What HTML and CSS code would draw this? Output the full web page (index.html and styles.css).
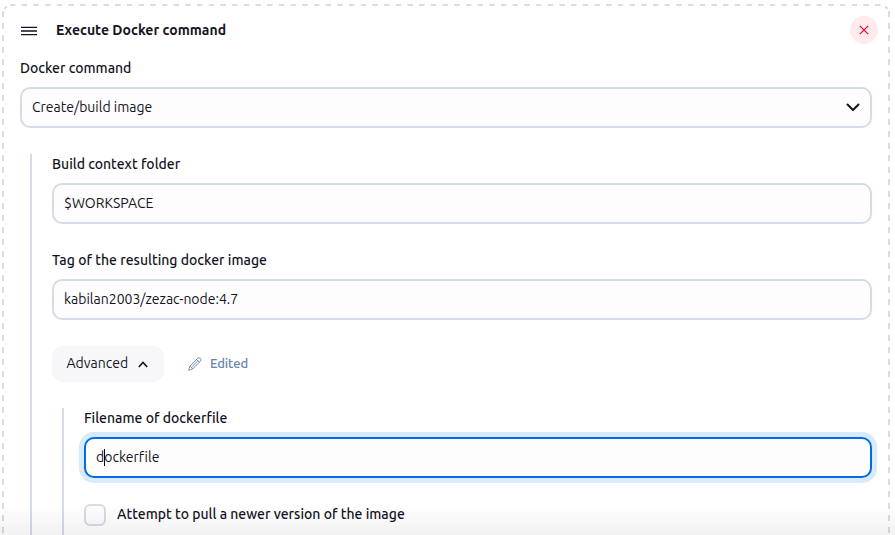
FILE: index.html
```html
<!DOCTYPE html>
<html lang="en">
<head>
<meta charset="utf-8">
<title>Execute Docker command</title>
<link rel="stylesheet" href="styles.css">
</head>
<body>
<main class="step">
  <svg class="frame" width="888" height="531" viewBox="2 4 888 531">
    <path class="edge-top" d="M10 5H882"/>
    <path class="edge-side" d="M3 11V535M889 11V535"/>
    <path class="corner" d="M4.300 8.800L7 6.400M887.700 8.800L885 6.400"/>
  </svg>
  <header class="step-header">
    <svg class="handle" width="16" height="12" viewBox="0 0 16 12"><path d="M0 2.400h16M0 9.600h16"/><path class="handle-middle" d="M0 6h16"/></svg>
    <h1 class="title">Execute Docker command</h1>
    <button class="remove" aria-label="Remove"><svg width="10" height="10" viewBox="0 0 10 10"><path d="M.8.8l8.4 8.4M9.2.8L.8 9.2"/></svg></button>
  </header>
  <div class="label">Docker command</div>
  <div class="control"><span>Create/build image</span>
    <svg class="chevron" width="14" height="9" viewBox="0 0 14 9"><path d="M1.5 1.5L7 7l5.500-5.500"/></svg>
  </div>
  <section class="nested">
    <div class="label">Build context folder</div>
    <div class="control"><span>$WORKSPACE</span></div>
    <div class="label spaced">Tag of the resulting docker image</div>
    <div class="control"><span>kabilan2003/zezac-node:4.7</span></div>
    <div class="advanced-row">
      <button class="advanced"><span>Advanced</span><svg width="10" height="7" viewBox="0 0 10 7"><path d="M.8 6L5 1.500 9.200 6"/></svg></button>
      <svg class="pencil" width="14" height="14" viewBox="0 0 14 14"><path d="M.7 13.300l1-4L9.800 1.200q1.300-1 2.500.2t.3 2.500L4.600 12zM1.700 9.300q2.200.4 2.900 2.700M8.600 2.400l2.900 2.900M9.900 3.800L4 9.700"/></svg>
      <span class="edited">Edited</span>
    </div>
    <section class="nested inner">
      <div class="label">Filename of dockerfile</div>
      <div class="control focused"><span class="value">dockerfile<i class="caret"></i></span></div>
      <div class="check-row"><span class="box"></span><span>Attempt to pull a newer version of the image</span></div>
    </section>
  </section>
</main>
<div class="fade"></div>
</body>
</html>
```
FILE: styles.css
```css
* { box-sizing: border-box; }
html, body { height: 100%; overflow: hidden; }
body {
  margin: 0;
  padding: 4px 5px 0 2px;
  background: #fff;
  color: #14141f;
  font: 14px/20px Ubuntu, "Noto Sans", sans-serif;
}
svg { fill: none; stroke: currentColor; flex: none; }
span { white-space: nowrap; }
button { border: 0; padding: 0; font: inherit; color: inherit; }
.step {
  position: relative;
  height: 531px;
  padding: 12px 18px 0;
}
.frame { position: absolute; top: 0; left: 0; color: #d7dce7; stroke-width: 2; }
.edge-top { stroke-dasharray: 5.4 6.290; }
.edge-side { stroke-dasharray: 6; }
.step-header { display: flex; align-items: center; height: 28px; }
.handle { margin: 2px 0 0 1px; stroke-width: 1.4; }
.handle-middle { stroke: #4a4a58; stroke-width: 2; }
.title { margin: 0 auto 0 19px; font-size: 14px; line-height: 20px; font-weight: 600; letter-spacing: .02px; }
.remove {
  display: flex; align-items: center; justify-content: center;
  width: 28px; height: 28px; margin-right: -6px;
  border-radius: 50%; background: #fdebed; color: #e6002e;
}
.remove svg { stroke-width: 1.2; }
.label { height: 20px; margin: 14px 0 9px; font-weight: 500; }
.control {
  display: flex; align-items: center; justify-content: space-between;
  height: 41px; padding: 0 10px 2px;
  border: 2px solid #d5dbe7; border-radius: 10px; background: #fdfdfd;
}
.chevron { margin-top: 2px; stroke-width: 2; stroke-linecap: round; stroke-linejoin: round; }
.nested {
  height: 381px;
  margin: 26px 0 0 10px; padding-left: 20px;
  border-left: 2px solid #d5dbe7;
}
.nested > .label:first-child { margin-top: 0; }
.nested > .label.spaced { margin-top: 26px; letter-spacing: .01px; }
.advanced-row { display: flex; align-items: center; margin-top: 26px; }
.advanced {
  display: flex; align-items: center; justify-content: space-between;
  width: 112px; height: 36px; padding: 0 16px 2px 14.5px;
  border-radius: 10px; background: #f7f7fa;
}
.advanced svg { margin-top: 3px; stroke-width: 1.6; }
.pencil { margin-left: 24px; color: #6783ab; stroke-width: .9; }
.edited { margin: 0 0 2px 8px; font-size: 13px; font-weight: 500; letter-spacing: -.1px; color: #6783ab; }
.nested.inner { height: 127px; }
.control.focused { border-color: #006ce0; box-shadow: 0 0 0 5px #d8eafb; }
.value { position: relative; font-variant-ligatures: none; }
.caret { position: absolute; left: 8px; top: 2px; width: 1px; height: 17px; background: #000; }
.check-row { display: flex; gap: 11px; margin-top: 26px; font-weight: 500; }
.box { width: 22px; height: 22px; border: 2px solid #d5dbe7; border-radius: 6px; background: #fdfdfd; }
.fade {
  position: fixed; left: 0; right: 0; bottom: 0; height: 30px;
  background: linear-gradient(rgba(0,0,0,0), rgba(0,0,0,.055));
}
```
